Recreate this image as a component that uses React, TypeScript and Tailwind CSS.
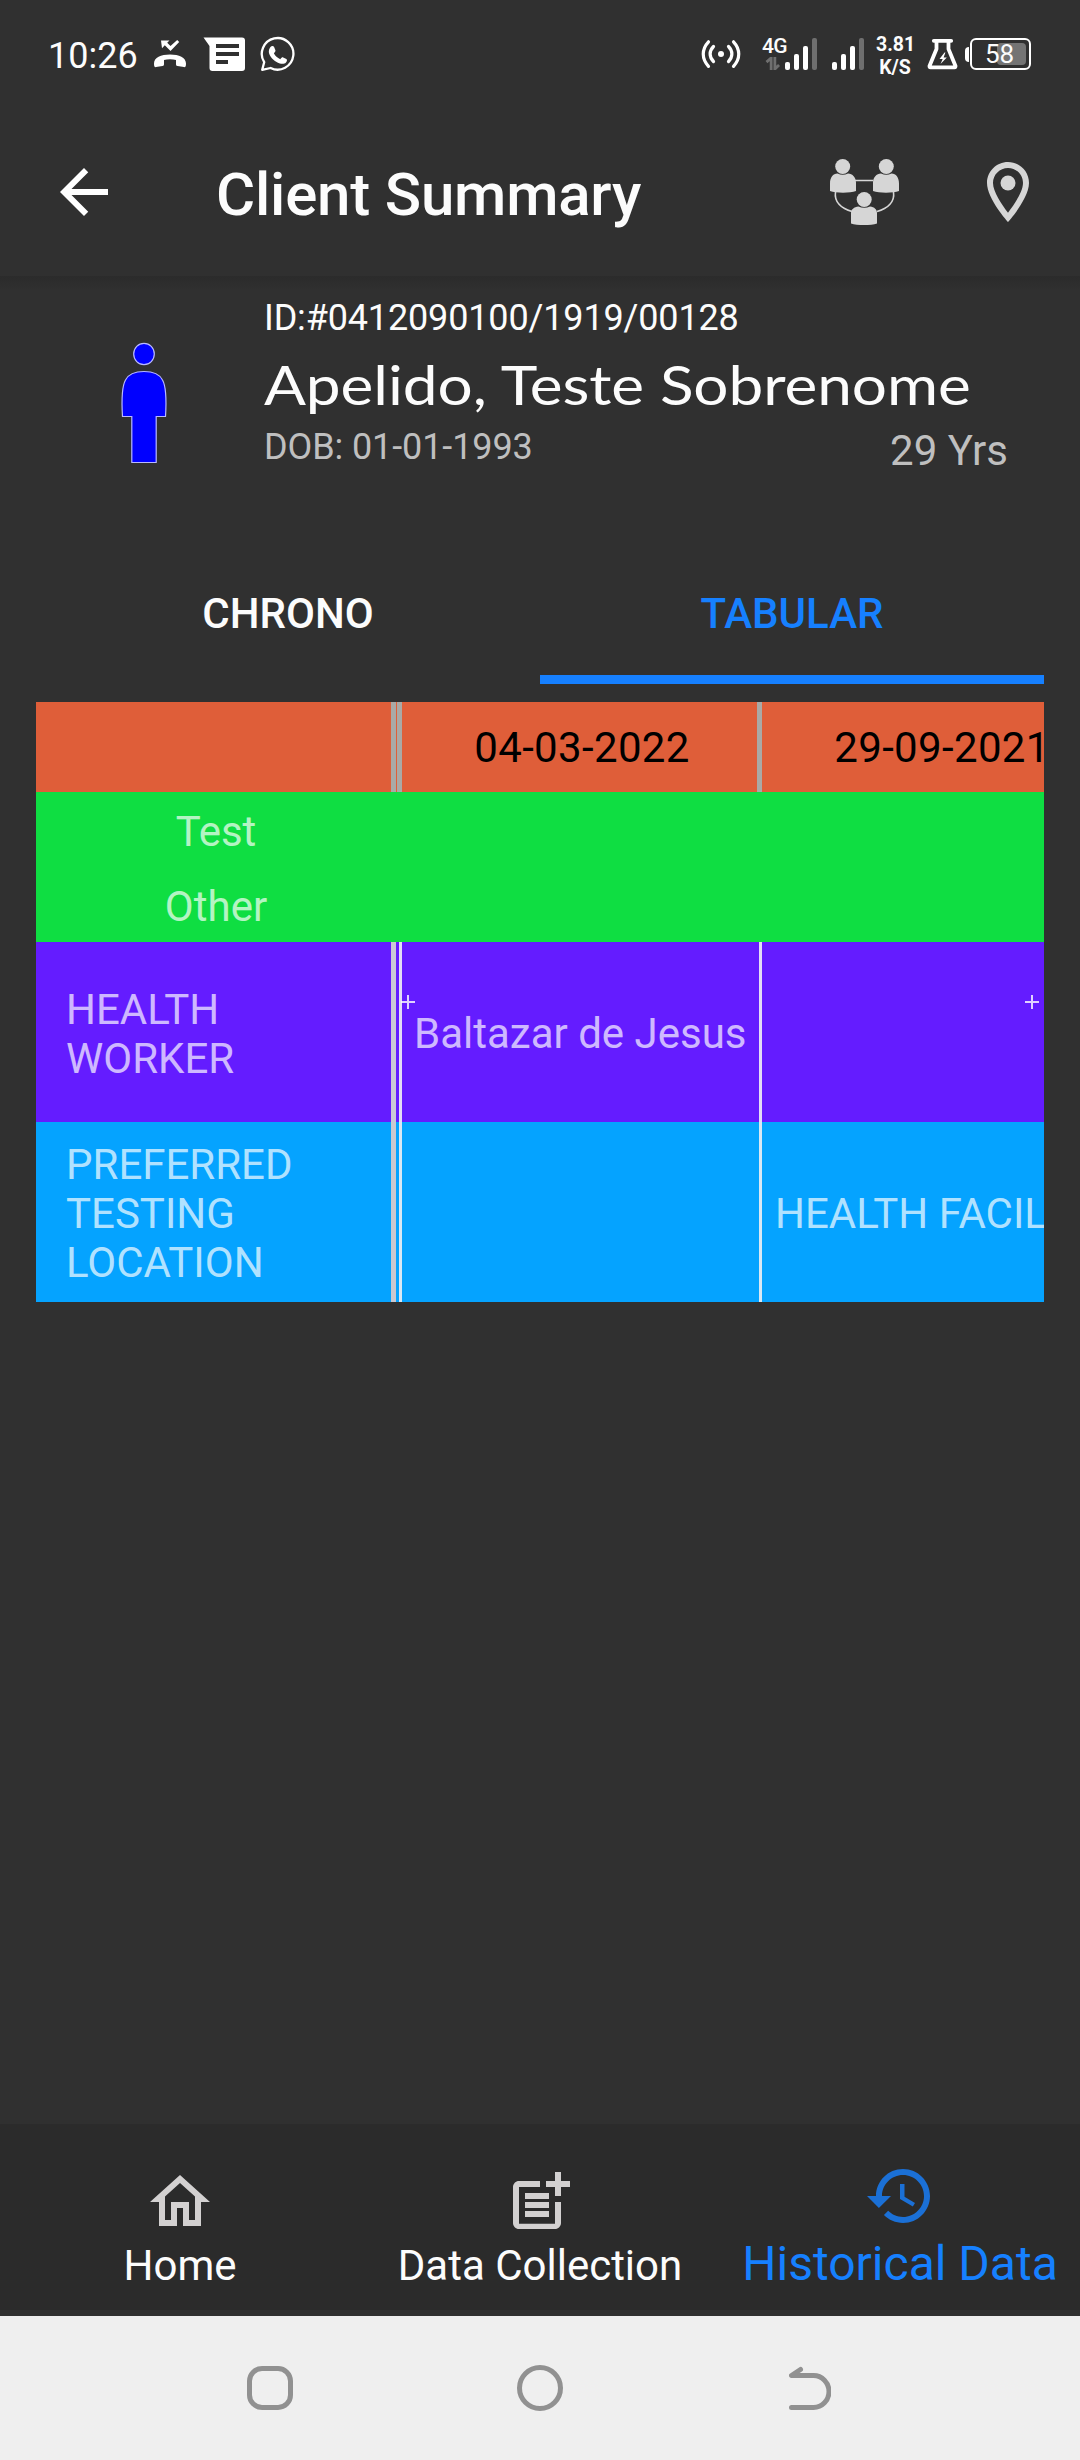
import type { ReactNode } from "react";

type IconProps = {
  className?: string;
};

type NavItemProps = {
  label: string;
  active?: boolean;
  children: ReactNode;
};

function MissedCallIcon({ className }: IconProps) {
  return (
    <svg viewBox="153 38 34 32" className={className} fill="#fff">
      <path d="M161 40.500h8.500l-2.300 2.300 3.300 3.300 6.700-6.100 2 2-8.700 8.900-5.700-5.700-2.800 3z" />
      <path d="M154 63.500c0-6 7-9 16-9s16 3 16 9c0 3-.5 3.800-2 3.600l-6.500-1c-1.200-.2-1.500-.8-1.500-2v-4c-3.500-1.200-8.500-1.200-12 0v4c0 1.200-.3 1.800-1.500 2l-6.500 1c-1.500.2-2-.6-2-3.600z" />
    </svg>
  );
}

function MessageIcon({ className }: IconProps) {
  return (
    <svg viewBox="203 36 43 36" className={className}>
      <path
        fill="#fff"
        fillRule="evenodd"
        d="M203.500 37.500H242a3 3 0 0 1 3 3V68a3 3 0 0 1-3 3h-29.500a3 3 0 0 1-3-3V46zM216 44v4h23v-4zm0 8v4h23v-4zm0 8v4h12v-4z"
      />
    </svg>
  );
}

function WhatsAppIcon({ className }: IconProps) {
  return (
    <svg viewBox="260 36 36 36" className={className}>
      <path
        fill="none"
        stroke="#fff"
        strokeWidth="2.300"
        strokeLinejoin="round"
        d="M262.200 69.800l2-7.600a15.800 15.800 0 1 1 6.400 5.800z"
      />
      <path
        fill="#fff"
        d="M271.500 46.300c1-.4 2.100-.3 2.600.8l1.300 3.200c.3.800-.1 1.500-1.500 3 1.300 2.700 3.500 4.700 6.400 5.900 1.400-1.900 2-2.200 2.900-1.800l3.200 1.600c1 .6.700 2.300-.4 3.400-1.500 1.500-3.700 1.800-6.200 1-5-1.700-9.200-5.700-10.600-9.700-.9-2.800.2-6.200 2.300-7.400z"
      />
    </svg>
  );
}

function HotspotIcon({ className }: IconProps) {
  return (
    <svg viewBox="700 38 42 32" className={className} fill="none" stroke="#fff" strokeWidth="3.200" strokeLinecap="round">
      <path d="M708.500 41.800c-7 7.500-7 17 0 24.500M713.500 46.500c-4.500 4.500-4.500 10.500 0 15M733.500 41.800c7 7.500 7 17 0 24.500M728.500 46.500c4.500 4.500 4.500 10.500 0 15" />
      <circle cx="721" cy="54" r="3" fill="#fff" stroke="none" />
    </svg>
  );
}

function SignalBars({ className }: IconProps) {
  return (
    <svg viewBox="0 0 33 32" className={className} fill="#fff">
      <rect x="0" y="24" width="5" height="8" rx="2" />
      <rect x="9" y="16" width="5" height="16" rx="2" />
      <rect x="18" y="8" width="5" height="24" rx="2" />
      <rect x="27" y="0" width="5" height="32" rx="2" fill="#6f6f6f" />
    </svg>
  );
}

function DataArrowsIcon({ className }: IconProps) {
  return (
    <svg viewBox="0 0 16 14" className={className} fill="none" stroke="#6f6f6f" strokeWidth="3">
      <path d="M6 14V1L1 5.500M10 0v13l4.500-4.500" />
    </svg>
  );
}

function FlaskIcon({ className }: IconProps) {
  return (
    <svg viewBox="926 38 32 32" className={className}>
      <path
        fill="none"
        stroke="#fff"
        strokeWidth="3.800"
        strokeLinejoin="round"
        strokeLinecap="round"
        d="M933.800 40.800h17.400M936.500 41v8l-7 17q-.2 1.300 1 1.300h24q1.200 0 1-1.300l-7-17v-8"
      />
      <path fill="#fff" d="M944.500 52.500l-5 6.500h3.200l-2.200 5 6.300-6.600h-3.200l1.800-4.900z" />
    </svg>
  );
}

function Battery() {
  return (
    <div className="ml-[7px] flex h-8 items-center">
      <div className="h-[15px] w-1 rounded-l-sm bg-white" />
      <div className="relative ml-px flex h-8 w-[61px] items-center justify-center rounded-md border-2 border-white">
        <div className="absolute right-[3px] h-[22px] w-[29px] rounded-sm bg-[#747474]" />
        <span className="relative pr-0.5 text-[26px] leading-none">58</span>
      </div>
    </div>
  );
}

function StatusBar() {
  return (
    <div className="flex h-[108px] items-center pl-12 pr-[49px]">
      <span className="w-[105px] pt-[3px] text-4xl leading-9">10:26</span>
      <MissedCallIcon className="h-8 w-[34px]" />
      <MessageIcon className="ml-4 h-9 w-[43px]" />
      <WhatsAppIcon className="ml-3.5 h-9 w-9" />
      <div className="ml-auto flex items-center">
        <HotspotIcon className="h-8 w-[42px]" />
        <div className="ml-[19px] flex h-8 w-[26px] flex-col items-end">
          <span className="text-[21px] leading-[17px] font-medium tracking-[-0.6px]">4G</span>
          <DataArrowsIcon className="mt-0.5 mr-1.5 h-[13px] w-4 shrink-0" />
        </div>
        <SignalBars className="-ml-0.5 h-8 w-[33px]" />
        <SignalBars className="ml-3.5 h-8 w-[33px]" />
        <div className="ml-[11px] w-[38px] pt-[3px] text-center text-[19.5px] leading-[23px] font-bold">
          <div>3.81</div>
          <div>K/S</div>
        </div>
        <FlaskIcon className="ml-3 h-8 w-8" />
        <Battery />
      </div>
    </div>
  );
}

function BackIcon({ className }: IconProps) {
  return (
    <svg viewBox="0 0 24 24" className={className} fill="#fff">
      <path d="M20 11H7.830l5.590-5.590L12 4l-8 8 8 8 1.410-1.410L7.830 13H20v-2z" />
    </svg>
  );
}

function GroupIcon({ className }: IconProps) {
  return (
    <svg viewBox="829 157 71 68" className={className} fill="#d6d6d6">
      <g fill="none" stroke="#d6d6d6" strokeWidth="1.600">
        <path d="M855 179.500h18M835.500 191c-1.500 10 6 16.500 16.500 19.500M893.500 191c1.500 10-6 16.500-16.500 19.500" />
      </g>
      <circle cx="842.700" cy="165.500" r="7.500" />
      <circle cx="886.300" cy="165.500" r="7.500" />
      <circle cx="864.200" cy="198.500" r="7.500" />
      <path d="M830 190v-7.500c0-6 3-10 7.500-10 3.500 1.600 7 1.600 10.500 0 4.500 0 8 4 8 9V190c-6 2.200-20 2.200-26 0z" />
      <path d="M873 190v-8.500c0-5 3.500-9 8-9 3.500 1.600 7 1.600 10.500 0 4.500 0 7.500 4 7.500 10v7.500c-6 2.200-20 2.200-26 0z" />
      <path d="M851 222.500V212c0-3.500 3-6 7.500-6.500 3.500 1.600 8 1.600 11.500 0 4.500.5 7 3 7 6.500v10.500c-6 2-20 2-26 0z" />
    </svg>
  );
}

function PinIcon({ className }: IconProps) {
  return (
    <svg viewBox="5 2 14 20" preserveAspectRatio="none" className={className} fill="#d6d6d6">
      <path d="M12 2C8.130 2 5 5.130 5 9c0 5.250 7 13 7 13s7-7.750 7-13c0-3.870-3.130-7-7-7zM7 9c0-2.760 2.240-5 5-5s5 2.240 5 5c0 2.880-2.880 7.190-5 9.880C9.920 16.210 7 11.850 7 9z" />
      <circle cx="12" cy="9" r="2.500" />
    </svg>
  );
}

function Header() {
  return (
    <header className="flex h-[168px] items-center pr-[51px] pl-12">
      <BackIcon className="size-[72px]" />
      <h1 className="ml-24 pt-[5px] text-[60px] leading-[70px] font-medium tracking-[-0.2px]">Client Summary</h1>
      <GroupIcon className="ml-auto h-[68px] w-[71px]" />
      <PinIcon className="ml-[87px] h-[60px] w-[42px]" />
    </header>
  );
}

function PersonIcon({ className }: IconProps) {
  return (
    <svg viewBox="120 342 48 122" className={className} fill="#00f" stroke="#b9b9ff" strokeWidth="1.200">
      <ellipse cx="144" cy="354" rx="10.300" ry="10.700" />
      <path d="M122.500 416.500c-1-16-1.200-29 3-36.500 3-6 9-8.500 18.500-8.500s15.500 2.500 18.500 8.500c4.200 7.500 4 20.500 3 36.500h-9.300v46H131.800v-46z" />
    </svg>
  );
}

function ClientProfile() {
  return (
    <section className="flex h-[276px] bg-linear-to-b from-[#2b2b2b] to-[#303030] to-[14px]">
      <div className="w-[264px] pt-[66px] pl-[120px]">
        <PersonIcon className="h-[122px] w-12" />
      </div>
      <div className="flex-1 pt-[18px] pr-[72px]">
        <p className="text-4xl leading-12 tracking-[-0.15px]">ID:#0412090100/1919/00128</p>
        <h2 className="h-[84px] w-[600px] origin-left scale-x-[1.15] font-[Lato] text-[54px] leading-[86px] tracking-[-0.05px] whitespace-nowrap">
          Apelido, Teste Sobrenome
        </h2>
        <div className="flex justify-between text-[#bfbfbf]">
          <span className="text-4xl leading-[42px] tracking-[-0.1px]">DOB: 01-01-1993</span>
          <span className="text-[42px] leading-[49px]">29 Yrs</span>
        </div>
      </div>
    </section>
  );
}

function Tabs() {
  return (
    <div className="mx-9 flex text-center text-[42px] leading-[123px] font-medium">
      <div className="h-[132px] flex-1">CHRONO</div>
      <div className="h-[132px] flex-1 border-b-9 border-[#1680ff] text-[#1680ff]">TABULAR</div>
    </div>
  );
}

function PlusMark({ className }: IconProps) {
  return (
    <svg viewBox="0 0 14 14" className={className} stroke="#fff" strokeOpacity="0.8" strokeWidth="2">
      <path d="M0 7h14M7 0v14" />
    </svg>
  );
}

function HistoryTable() {
  return (
    <div className="mx-9 mt-[18px] overflow-hidden text-[42px] leading-[49px] whitespace-nowrap">
      <div className="flex h-[90px] bg-[#df5e39] leading-[91px] tracking-[0.35px] text-black">
        <div className="w-[360px] shrink-0 border-r-5 border-[#aaa9a6]" />
        <div className="ml-px w-[365px] shrink-0 border-x-5 border-[#aaa9a6] pl-[5px] text-center">04-03-2022</div>
        <div className="w-[360px] shrink-0 text-center">29-09-2021</div>
      </div>
      <div className="h-[150px] bg-[#0fde42] text-white/70">
        <div className="w-[360px] text-center leading-[79px]">Test</div>
        <div className="w-[360px] text-center leading-[71px]">Other</div>
      </div>
      <div className="flex h-[180px] bg-[#641cff] text-white/70">
        <div className="flex w-[360px] shrink-0 items-center border-r-5 border-[#cbc8d6] pt-1 pl-[30px]">
          HEALTH
          <br />
          WORKER
        </div>
        <div className="relative ml-[3px] flex w-[363px] shrink-0 items-center border-x-3 border-[#e4dcf6] pt-0.5 pl-3">
          Baltazar de Jesus
          <PlusMark className="absolute top-[53px] -left-px size-3.5" />
        </div>
        <div className="relative w-[360px] shrink-0">
          <PlusMark className="absolute top-[53px] left-[263px] size-3.5" />
        </div>
      </div>
      <div className="flex h-[180px] bg-[#05a3ff] text-white/70">
        <div className="flex w-[360px] shrink-0 items-center border-r-5 border-[#cbc8d0] pt-0.5 pl-[30px]">
          PREFERRED
          <br />
          TESTING
          <br />
          LOCATION
        </div>
        <div className="ml-[3px] w-[363px] shrink-0 border-x-3 border-[#d9e8f4]" />
        <div className="flex w-[360px] shrink-0 items-center pt-0.5 pl-[13px]">HEALTH FACILITY</div>
      </div>
    </div>
  );
}

function NavItem({ label, active, children }: NavItemProps) {
  return (
    <div className={active ? "flex-1 pt-9 text-center text-[#1680ff]" : "flex-1 pt-[42px] text-center text-[#fcfcfc]"}>
      <svg
        viewBox="0 0 24 24"
        className={active ? "mx-auto size-[72px] fill-[#1b70d6]" : "mx-auto size-[72px] fill-[#d3d1d1]"}
      >
        {children}
      </svg>
      <div className={active ? "mt-[3px] text-5xl leading-[58px]" : "mt-0.5 text-[42px] leading-[52px]"}>{label}</div>
    </div>
  );
}

function BottomNav() {
  return (
    <nav className="flex h-[192px] border-b-6 border-[#303030] bg-[#2b2b2b]">
      <NavItem label="Home">
        <path d="M12 5.690l5 4.500V18h-2v-6H9v6H7v-7.810l5-4.500M12 3L2 12h3v8h6v-6h2v6h6v-8h3L12 3z" />
      </NavItem>
      <NavItem label="Data Collection">
        <path d="M17 19.220H5V7h7V5H5c-1.100 0-2 .9-2 2v12c0 1.100.9 2 2 2h12c1.100 0 2-.9 2-2v-7h-2v7.220z" />
        <path d="M19 2h-2v3h-3v2h3v3h2V7h3V5h-3V2zM7 9h8v2H7zM7 12v2h8v-2zM7 15h8v2H7z" />
      </NavItem>
      <NavItem label="Historical Data" active>
        <path d="M13 3c-4.970 0-9 4.030-9 9H1l3.890 3.890.07.14L9 12H6c0-3.870 3.130-7 7-7s7 3.130 7 7-3.130 7-7 7c-1.930 0-3.680-.79-4.940-2.060l-1.420 1.420C8.270 19.990 10.510 21 13 21c4.970 0 9-4.030 9-9s-4.030-9-9-9zm-1 5v5l4.280 2.540.72-1.210-3.500-2.080V8H12z" />
      </NavItem>
    </nav>
  );
}

function SystemNav() {
  return (
    <div className="flex h-36 items-center bg-[#efefef]">
      <div className="flex w-[540px] justify-center">
        <div className="h-11 w-[46px] rounded-[15px] border-5 border-[#919191]" />
      </div>
      <div className="-ml-[23px] size-[46px] shrink-0 rounded-full border-5 border-[#919191]" />
      <svg
        viewBox="789 2366 42 45"
        className="ml-[226px] h-[45px] w-[42px]"
        fill="none"
        stroke="#919191"
        strokeWidth="5"
        strokeLinecap="round"
        strokeLinejoin="round"
      >
        <path d="M800.500 2369.500l-9 6h22a15.500 16 0 0 1 0 32h-22" />
      </svg>
    </div>
  );
}

export default function App() {
  return (
    <div className="flex h-[2460px] w-[1080px] flex-col overflow-hidden bg-[#303030] font-[Roboto,sans-serif] text-[#fcfcfc]">
      <StatusBar />
      <Header />
      <ClientProfile />
      <Tabs />
      <HistoryTable />
      <div className="flex-1" />
      <BottomNav />
      <SystemNav />
    </div>
  );
}
